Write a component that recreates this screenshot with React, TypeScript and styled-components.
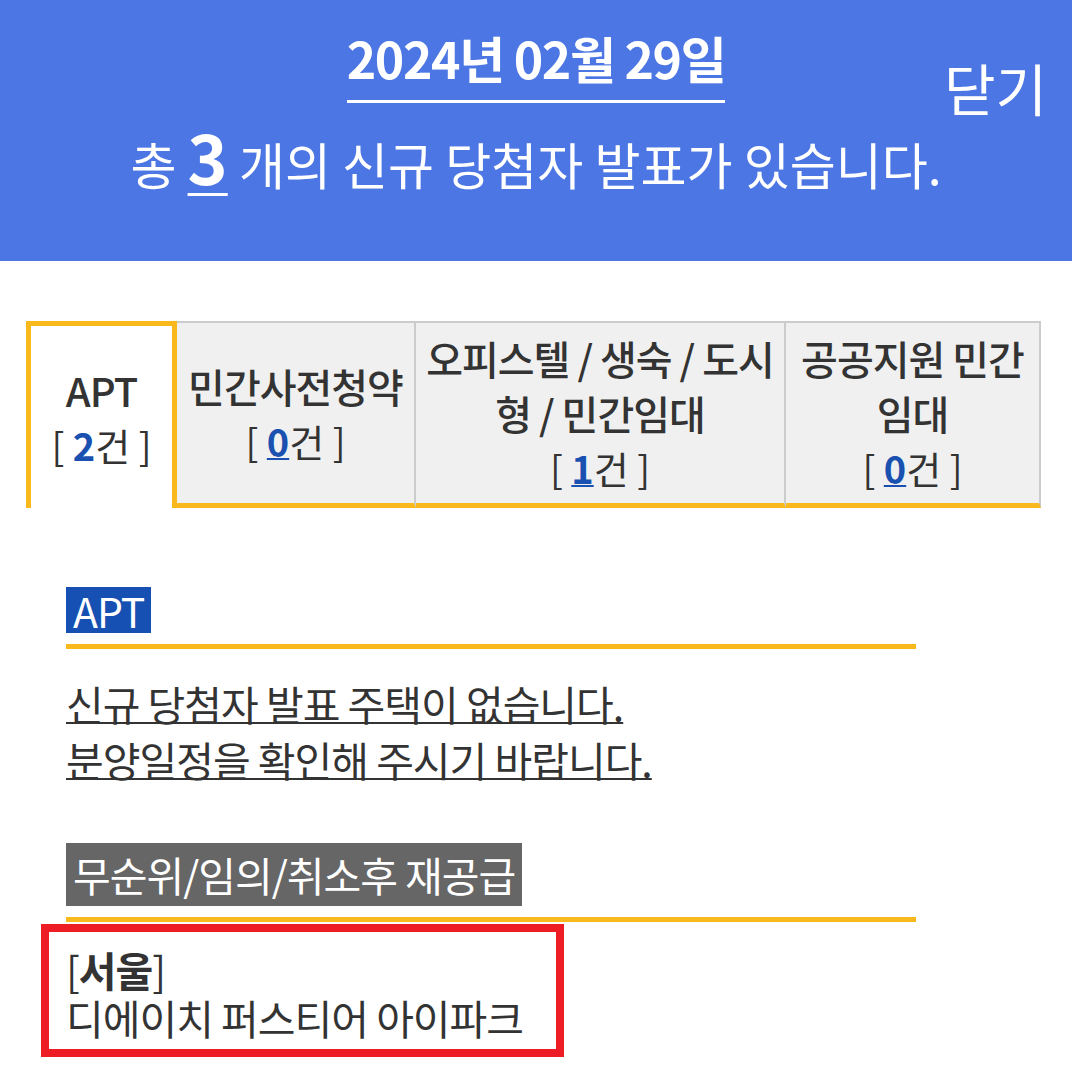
import React from "react";
import styled, { createGlobalStyle } from "styled-components";

const FONT = `"Noto Sans CJK KR", "Noto Sans", sans-serif`;
const YELLOW = "#f9b91c";

const GlobalStyle = createGlobalStyle`
  html, body { margin: 0; padding: 0; background: #fff; }
  body { font-family: ${FONT}; color: #333; }
`;

const Header = styled.header`
  position: relative;
  box-sizing: border-box;
  height: 261px;
  padding-top: 25px;
  background: #4c76e3;
  color: #fff;
  text-align: center;
`;

const DateTitle = styled.h1`
  display: inline-block;
  margin: 0;
  padding-bottom: 11px;
  border-bottom: 3px solid #fff;
  font-size: 50px;
  font-weight: 700;
  line-height: 64px;
  letter-spacing: -1.4px;
`;

const Summary = styled.p`
  margin: 30px 0 0;
  font-size: 50px;
  font-weight: 400;
  line-height: 60px;
  letter-spacing: 0;
`;

const TotalCount = styled.strong`
  font-size: 68px;
  font-weight: 700;
  line-height: 40px;
  text-decoration: underline;
  text-decoration-thickness: 3px;
  text-underline-offset: 8px;
`;

const CloseButton = styled.button`
  position: absolute;
  top: 59px;
  right: 25px;
  padding: 0;
  border: 0;
  background: none;
  color: #fff;
  font-family: ${FONT};
  font-size: 56px;
  font-weight: 400;
  line-height: 56px;
  cursor: pointer;
`;

const Tabs = styled.nav`
  display: grid;
  grid-template-columns: 151px 239px 370px 255px;
  width: 1015px;
  margin: 60px 0 0 26px;
`;

const Tab = styled.div<{ $active?: boolean }>`
  box-sizing: border-box;
  height: 187px;
  display: flex;
  flex-direction: column;
  align-items: center;
  justify-content: center;
  text-align: center;
  white-space: nowrap;
  background: ${(p) => (p.$active ? "#fff" : "#f0f0f0")};
  border-top: ${(p) => (p.$active ? `5px solid ${YELLOW}` : "2px solid #ccc")};
  border-left: ${(p) => (p.$active ? `5px solid ${YELLOW}` : "0")};
  border-right: ${(p) => (p.$active ? `5px solid ${YELLOW}` : "2px solid #ccc")};
  border-bottom: ${(p) => (p.$active ? "0" : `5px solid ${YELLOW}`)};
`;

const TabTitle = styled.span`
  font-size: 40px;
  font-weight: 500;
  line-height: 55px;
  letter-spacing: -1px;
  color: #333;
`;

const TabCount = styled.span`
  font-size: 38px;
  font-weight: 400;
  line-height: 54px;
  color: #333;
`;

const CountNum = styled.b<{ $link?: boolean }>`
  color: #1a51b1;
  font-weight: 700;
  text-decoration: ${(p) => (p.$link ? "underline" : "none")};
  text-decoration-thickness: 2px;
`;

const Main = styled.main`
  padding: 79px 0 0 41px;
`;

const Section = styled.section<{ $gap?: number }>`
  width: 850px;
  padding-left: 25px;
  margin-top: ${(p) => p.$gap ?? 0}px;
`;

const Label = styled.h2<{ $tone: "blue" | "gray" }>`
  width: fit-content;
  margin: 0;
  padding: 0 7px;
  font-size: 41px;
  font-weight: 400;
  letter-spacing: -1px;
  color: #fff;
  line-height: ${(p) => (p.$tone === "blue" ? "46px" : "63px")};
  background: ${(p) => (p.$tone === "blue" ? "#1550b2" : "#666")};
`;

const Rule = styled.div`
  height: 5px;
  margin-top: 11px;
  background: ${YELLOW};
`;

const Notice = styled.a`
  display: block;
  width: fit-content;
  margin-top: 26px;
  font-size: 41px;
  line-height: 56px;
  letter-spacing: -1px;
  color: #333;
  text-decoration: underline;
  text-decoration-thickness: 2px;
`;

const ResultItem = styled.div`
  box-sizing: border-box;
  width: 523px;
  margin: 2px 0 0 -25px;
  padding: 13px 17px 8px;
  border: 8px solid #ee1d25;
  font-size: 41px;
  line-height: 48px;
  letter-spacing: -1px;
  color: #333;
`;

const Region = styled.b`
  font-weight: 700;
`;

const tabs = [
  { title: ["APT"], count: 2, active: true },
  { title: ["민간사전청약"], count: 0 },
  { title: ["오피스텔 / 생숙 / 도시", "형 / 민간임대"], count: 1 },
  { title: ["공공지원 민간", "임대"], count: 0 },
];

export default function App() {
  return (
    <>
      <GlobalStyle />
      <Header>
        <DateTitle>2024년 02월 29일</DateTitle>
        <Summary>
          총 <TotalCount>3</TotalCount> 개의 신규 당첨자 발표가 있습니다.
        </Summary>
        <CloseButton type="button">닫기</CloseButton>
      </Header>

      <Tabs>
        {tabs.map((t, i) => (
          <Tab key={i} $active={t.active}>
            <TabTitle>
              {t.title.map((line, j) => (
                <React.Fragment key={j}>
                  {j > 0 && <br />}
                  {line}
                </React.Fragment>
              ))}
            </TabTitle>
            <TabCount>
              [ <CountNum $link={!t.active}>{t.count}</CountNum>건 ]
            </TabCount>
          </Tab>
        ))}
      </Tabs>

      <Main>
        <Section>
          <Label $tone="blue">APT</Label>
          <Rule />
          <Notice href="#">
            신규 당첨자 발표 주택이 없습니다.
            <br />
            분양일정을 확인해 주시기 바랍니다.
          </Notice>
        </Section>
        <Section $gap={56}>
          <Label $tone="gray">무순위/임의/취소후 재공급</Label>
          <Rule />
          <ResultItem>
            [<Region>서울</Region>]
            <br />
            디에이치 퍼스티어 아이파크
          </ResultItem>
        </Section>
      </Main>
    </>
  );
}
